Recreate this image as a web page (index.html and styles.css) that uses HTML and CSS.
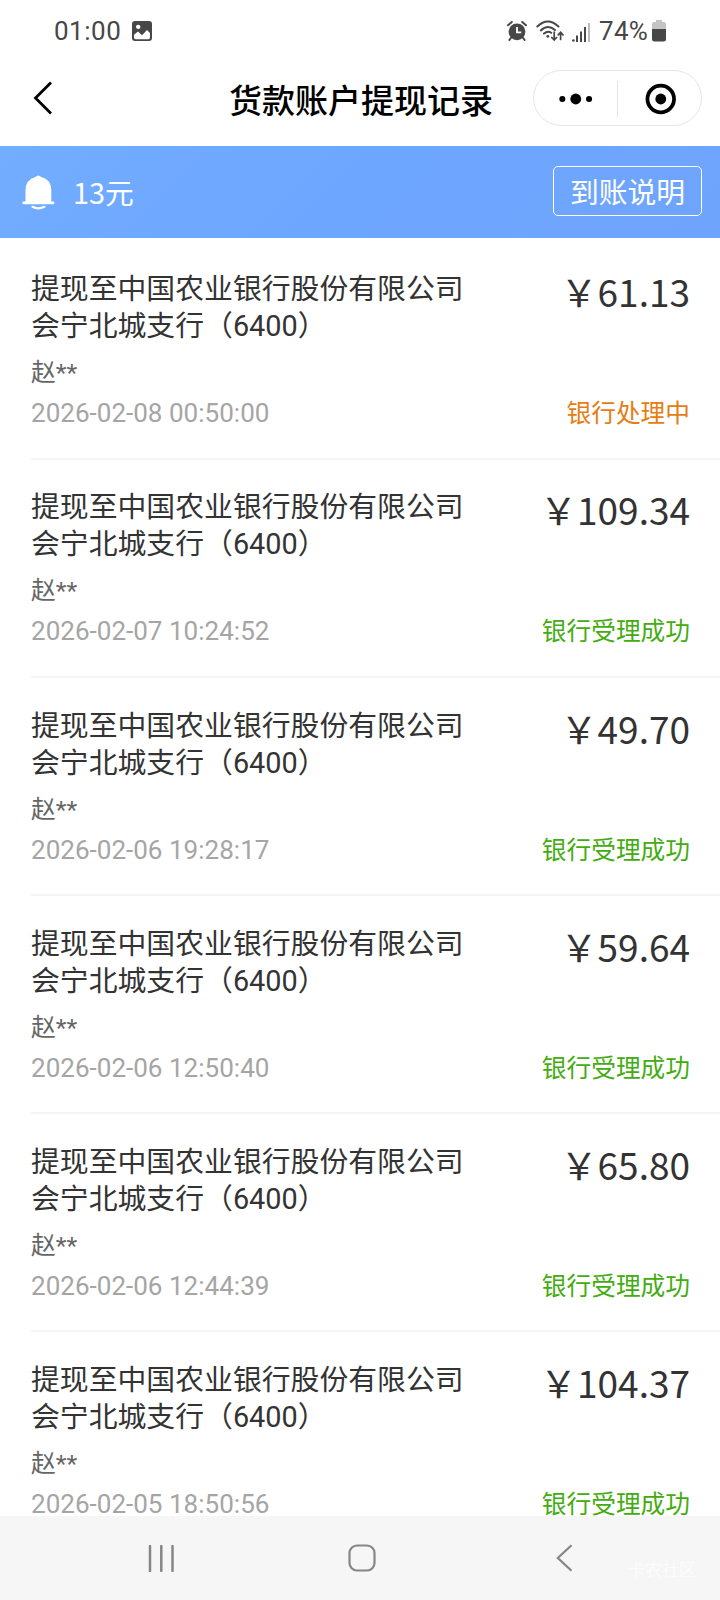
FILE: index.html
```html
<!DOCTYPE html>
<html lang="zh-CN">
<head>
<meta charset="utf-8">
<title>货款账户提现记录</title>
<link rel="stylesheet" href="styles.css">
</head>
<body>
<div class="screen">
  <div class="status-bar">
    <span class="clock">01:00</span>
    <svg class="photo-icon" width="20" height="20" viewBox="0 0 20 20"><path fill="#474747" fill-rule="evenodd" d="M3 0H17Q20 0 20 3V17Q20 20 17 20H3Q0 20 0 17V3Q0 0 3 0ZM2 13.7V16.5Q2 18.2 3.7 18.2H16.3Q18 18.2 18 16.5V12L15 9L10 14.2L6 10.5ZM6.2 3.7a2.2 2.2 0 1 0 .01 0Z"/></svg>
    <svg class="alarm-icon" width="20" height="20" viewBox="0 0 20 20"><circle cx="10" cy="10.8" r="8.4" fill="#474747"/><path d="M1 4.3L4.8 1M19 4.3L15.2 1M4.2 16.5L2.4 19M15.8 16.5L17.6 19" stroke="#474747" stroke-width="2" stroke-linecap="round"/><path d="M10 6V11.3H14.3" fill="none" stroke="#fff" stroke-width="1.8"/></svg>
    <svg class="wifi-icon" width="28" height="22" viewBox="0 0 28 22"><g fill="none" stroke="#474747" stroke-width="2" stroke-linecap="round"><path d="M1.3 6.5Q11.8-3.5 22.5 6.5M4.8 10.4Q11.8 3.8 19 10M8 13.6Q11.8 10.4 15.2 12.8"/><path stroke-width="1.7" d="M18.2 12V20M15.8 17.5L18.2 20L20.6 17.5M24.6 19.5V12.3M22.2 14.8L24.6 12.3L27 14.8"/></g><circle cx="11.8" cy="16.3" r="1.4" fill="#474747"/></svg>
    <svg class="signal-icon" width="18" height="19" viewBox="0 0 18 19"><circle cx="1.4" cy="17.5" r="1.3" fill="#474747"/><path d="M5 19V12.5M9 19V8.5M13 19V4" stroke="#474747" stroke-width="2"/><path d="M17 19V0" stroke="#bdbdbd" stroke-width="2"/></svg>
    <span class="percent">74%</span>
    <svg class="battery-icon" width="14" height="22" viewBox="0 0 14 22"><path d="M4 0H10V2H12Q14 2 14 4V10H0V4Q0 2 2 2H4Z" fill="#c4c4c4"/><path d="M0 9H14V19Q14 21.5 11.5 21.5H2.5Q0 21.5 0 19Z" fill="#474747"/></svg>
  </div>

  <header class="title-bar">
    <svg class="back-icon" width="20" height="36" viewBox="0 0 20 36"><path d="M18 2.5L2.5 18L18 33.5" fill="none" stroke="#000" stroke-width="2.8"/></svg>
    <h1 class="page-title">货款账户提现记录</h1>
    <div class="capsule">
      <svg class="more-icon" width="34" height="12" viewBox="0 0 34 12"><circle cx="3.4" cy="6" r="3.1"/><circle cx="17" cy="6" r="5.5"/><circle cx="30.5" cy="6" r="3.1"/></svg>
      <span class="capsule-divider"></span>
      <svg class="target-icon" width="32" height="32" viewBox="0 0 32 32"><circle cx="16" cy="16" r="13.5" fill="none" stroke="#000" stroke-width="3.8"/><circle cx="16" cy="16" r="5.5"/></svg>
    </div>
  </header>

  <section class="notice">
    <svg class="bell-icon" width="33" height="35" viewBox="0 0 33 35"><path fill="#fff" d="M13.5 2Q16.3-1 19.2 2Q29.3 4.5 29.3 15.5V26.5H31.2Q32.5 26.5 32.5 27.8T31.2 29.2H1.6Q.3 29.2.3 27.8T1.6 26.5H3.5V15.5Q3.5 4.5 13.5 2Z"/><path d="M10.5 31.8Q16.3 34.8 22.3 31.8" fill="none" stroke="#fff" stroke-width="2.2" stroke-linecap="round"/></svg>
    <span class="notice-text">13元</span>
    <button class="notice-button">到账说明</button>
  </section>

  <main class="records">
    <article class="record">
      <div class="record-top"><div class="bank">提现至中国农业银行股份有限公司会宁北城支行（6400）</div><div class="amount">￥61.13</div></div>
      <div class="payee">赵**</div>
      <div class="record-bottom"><time class="time">2026-02-08 00:50:00</time><span class="state pending">银行处理中</span></div>
    </article>
    <article class="record">
      <div class="record-top"><div class="bank">提现至中国农业银行股份有限公司会宁北城支行（6400）</div><div class="amount">￥109.34</div></div>
      <div class="payee">赵**</div>
      <div class="record-bottom"><time class="time">2026-02-07 10:24:52</time><span class="state">银行受理成功</span></div>
    </article>
    <article class="record">
      <div class="record-top"><div class="bank">提现至中国农业银行股份有限公司会宁北城支行（6400）</div><div class="amount">￥49.70</div></div>
      <div class="payee">赵**</div>
      <div class="record-bottom"><time class="time">2026-02-06 19:28:17</time><span class="state">银行受理成功</span></div>
    </article>
    <article class="record">
      <div class="record-top"><div class="bank">提现至中国农业银行股份有限公司会宁北城支行（6400）</div><div class="amount">￥59.64</div></div>
      <div class="payee">赵**</div>
      <div class="record-bottom"><time class="time">2026-02-06 12:50:40</time><span class="state">银行受理成功</span></div>
    </article>
    <article class="record">
      <div class="record-top"><div class="bank">提现至中国农业银行股份有限公司会宁北城支行（6400）</div><div class="amount">￥65.80</div></div>
      <div class="payee">赵**</div>
      <div class="record-bottom"><time class="time">2026-02-06 12:44:39</time><span class="state">银行受理成功</span></div>
    </article>
    <article class="record">
      <div class="record-top"><div class="bank">提现至中国农业银行股份有限公司会宁北城支行（6400）</div><div class="amount">￥104.37</div></div>
      <div class="payee">赵**</div>
      <div class="record-bottom"><time class="time">2026-02-05 18:50:56</time><span class="state">银行受理成功</span></div>
    </article>
  </main>

  <nav class="nav-bar">
    <svg class="recents-icon" width="27" height="27" viewBox="0 0 27 27"><path d="M2 1V26M13.3 1V26M24.5 1V26" stroke="#868686" stroke-width="2.5" stroke-linecap="round"/></svg>
    <svg class="home-icon" width="28" height="28" viewBox="0 0 28 28"><rect x="1.5" y="1.5" width="25" height="25" rx="7.5" fill="none" stroke="#868686" stroke-width="2.2"/></svg>
    <svg class="return-icon" width="17" height="28" viewBox="0 0 17 28"><path d="M15.5 1.2L1.8 14L15.5 26.8" fill="none" stroke="#868686" stroke-width="2.2"/></svg>
    <span class="watermark">卡农社区</span>
  </nav>
</div>
</body>
</html>
```
FILE: styles.css
```css
body {
  margin: 0;
  background: #fff;
  font-family: Roboto, "Noto Sans CJK SC", sans-serif;
}
.screen {
  display: flex;
  flex-direction: column;
  width: 720px;
  height: 1600px;
  overflow: hidden;
}
.status-bar {
  display: flex;
  align-items: center;
  flex: none;
  box-sizing: border-box;
  height: 62px;
  padding: 0 54px 0 54px;
  color: #474747;
  font-size: 26px;
}
.clock { width: 78px; letter-spacing: 0.5px; }
.photo-icon { margin-right: auto; }
.alarm-icon { margin-right: 9px; }
.wifi-icon { margin-right: 8px; }
.signal-icon { margin: 2px 9px 0 0; }
.percent { width: 49px; margin-right: 4px; letter-spacing: 0.3px; }

.title-bar {
  display: flex;
  align-items: flex-start;
  flex: none;
  box-sizing: border-box;
  height: 84px;
  padding: 8px 18px 0 33px;
}
.back-icon { margin-top: 10px; }
.page-title {
  margin: 8px auto 0 176px;
  font-size: 33px;
  line-height: 48px;
  font-weight: 500;
  color: #000;
  white-space: nowrap;
}
.capsule {
  display: flex;
  align-items: center;
  box-sizing: border-box;
  width: 169px;
  height: 56px;
  padding: 1px 24px 0 25px;
  border: 1px solid #e5e5e5;
  border-radius: 28px;
}
.capsule-divider {
  width: 1px;
  height: 36px;
  margin: 0 28px 0 24px;
  background: #e4e4e4;
}

.notice {
  display: flex;
  align-items: center;
  flex: none;
  box-sizing: border-box;
  height: 92px;
  padding: 0 18px 0 22px;
  background: linear-gradient(135deg, #72adff, #6da6ff 50%, #6fa4fc);
  color: #fff;
  font-family: "Noto Sans CJK SC", sans-serif;
  font-size: 28.8px;
}
.notice-text { margin: 0 auto 2px 18px; }
.notice-button {
  box-sizing: border-box;
  width: 149px;
  height: 50px;
  margin-bottom: 2px;
  padding: 0;
  border: 1px solid #fff;
  border-radius: 5px;
  background: transparent;
  color: #fff;
  font: inherit;
  line-height: 46px;
}

.records { flex: 1; min-height: 0; overflow: hidden; }
.record {
  box-sizing: border-box;
  height: 218px;
  margin-left: 31px;
  padding: 30px 30px 0 0;
  border-bottom: 2px solid #f5f5f5;
}
.record:first-child { height: 222px; padding-top: 33px; }
.record:nth-child(2) { padding-top: 29px; }
.record-top,
.record-bottom { display: flex; justify-content: space-between; }
.bank {
  width: 440px;
  color: #333;
  font-size: 28.85px;
  line-height: 37px;
}
.amount {
  color: #333;
  font-family: "Noto Sans CJK SC", sans-serif;
  font-size: 37px;
  line-height: 40px;
}
.payee {
  margin-top: 9.5px;
  color: #666;
  font-size: 24.8px;
  line-height: 36px;
}
.record-bottom { margin-top: 3px; line-height: 38px; }
.time { color: #a5a5a5; font-size: 26.05px; }
.state { color: #43ac10; font-size: 24.7px; line-height: 40px; }
.state.pending { color: #e67d12; }

.nav-bar {
  display: flex;
  align-items: center;
  flex: none;
  height: 84px;
  padding-left: 148px;
  background: #f6f6f6;
}
.home-icon { margin-left: 173px; }
.return-icon { margin-left: 180px; }
.watermark {
  margin: 20px 0 0 55px;
  color: #fcfcfc;
  font-size: 17px;
}
```
